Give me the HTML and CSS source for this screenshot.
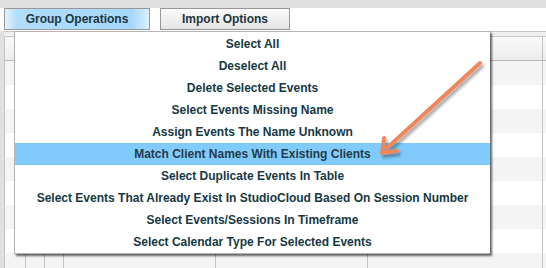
FILE: index.html
```html
<!DOCTYPE html>
<html lang="en">
<head>
    <meta charset="UTF-8">
    <title>Group Operations</title>
    <link rel="stylesheet" href="styles.css">
</head>
<body>
    <div class="topbar"></div>

    <div class="toolbar">
        <button class="tool-btn active">Group Operations</button>
        <button class="tool-btn">Import Options</button>
    </div>

    <!-- Event table behind the menu -->
    <div class="grid">
        <div class="row head">
            <div class="cell c1"></div><div class="cell c2"></div><div class="cell c3"></div>
            <div class="cell c4"></div><div class="cell c5"></div><div class="cell c6"></div>
            <div class="cell c7"></div>
        </div>
        <div class="row"><div class="cell c1"></div><div class="cell c2"></div><div class="cell c3"></div><div class="cell c4"></div><div class="cell c5"></div><div class="cell c6"></div><div class="cell c7"></div></div>
        <div class="row"><div class="cell c1"></div><div class="cell c2"></div><div class="cell c3"></div><div class="cell c4"></div><div class="cell c5"></div><div class="cell c6"></div><div class="cell c7"></div></div>
        <div class="row"><div class="cell c1"></div><div class="cell c2"></div><div class="cell c3"></div><div class="cell c4"></div><div class="cell c5"></div><div class="cell c6"></div><div class="cell c7"></div></div>
        <div class="row"><div class="cell c1"></div><div class="cell c2"></div><div class="cell c3"></div><div class="cell c4"></div><div class="cell c5"></div><div class="cell c6"></div><div class="cell c7"></div></div>
        <div class="row"><div class="cell c1"></div><div class="cell c2"></div><div class="cell c3"></div><div class="cell c4"></div><div class="cell c5"></div><div class="cell c6"></div><div class="cell c7"></div></div>
        <div class="row"><div class="cell c1"></div><div class="cell c2"></div><div class="cell c3"></div><div class="cell c4"></div><div class="cell c5"></div><div class="cell c6"></div><div class="cell c7"></div></div>
        <div class="row"><div class="cell c1"></div><div class="cell c2"></div><div class="cell c3"></div><div class="cell c4"></div><div class="cell c5"></div><div class="cell c6"></div><div class="cell c7"></div></div>
        <div class="row"><div class="cell c1"></div><div class="cell c2"></div><div class="cell c3"></div><div class="cell c4"></div><div class="cell c5"></div><div class="cell c6"></div><div class="cell c7"></div></div>
        <div class="row"><div class="cell c1"></div><div class="cell c2"></div><div class="cell c3"></div><div class="cell c4"></div><div class="cell c5"></div><div class="cell c6"></div><div class="cell c7"></div></div>
    </div>

    <!-- Dropdown menu -->
    <ul class="menu">
        <li>Select All</li>
        <li>Deselect All</li>
        <li>Delete Selected Events</li>
        <li>Select Events Missing Name</li>
        <li>Assign Events The Name Unknown</li>
        <li class="hover">Match Client Names With Existing Clients</li>
        <li>Select Duplicate Events In Table</li>
        <li>Select Events That Already Exist In StudioCloud Based On Session Number</li>
        <li>Select Events/Sessions In Timeframe</li>
        <li>Select Calendar Type For Selected Events</li>
    </ul>

    <!-- Annotation arrow -->
    <svg class="arrow" width="546" height="268" viewBox="0 0 546 268">
        <defs>
            <filter id="shade" x="-20%" y="-20%" width="140%" height="140%">
                <feDropShadow dx="2" dy="3" stdDeviation="1.6" flood-color="#000" flood-opacity="0.35"/>
            </filter>
        </defs>
        <g filter="url(#shade)" stroke="#f0875c" stroke-width="4" stroke-linecap="round" fill="none">
            <line x1="480" y1="63" x2="387" y2="148"/>
            <polyline points="384,138 382,153 397,151" stroke-linejoin="round"/>
        </g>
    </svg>
</body>
</html>
```

FILE: styles.css
```css
body {
    margin: 0;
    width: 546px;
    height: 268px;
    overflow: hidden;
    position: relative;
    background: #fff;
    font-family: "Liberation Sans", Arial, sans-serif;
}

.topbar {
    height: 8px;
    background: #e0e0e0;
}

.toolbar {
    display: flex;
    gap: 10px;
    padding-left: 4px;
    height: 23px;
    border-left: 4px solid #e0e0e0;
    margin-left: -4px;
}

.tool-btn {
    height: 22px;
    padding: 0;
    border: 1px solid #979797;
    border-radius: 0;
    background: linear-gradient(to bottom, #fbfbfb, #e4e4e4);
    color: #1c3640;
    font-family: "Liberation Sans", Arial, sans-serif;
    font-weight: bold;
    font-size: 12px;
    width: 130px;
}

.tool-btn.active {
    width: 146px;
    background: linear-gradient(to right, #e4f3fd 0%, #b2ddfb 8%, #a6d7fa 88%, #dbf0fd 100%);
}

.grid {
    border-left: 4px solid #e0e0e0;
    height: 237px;
}

.grid .row {
    display: flex;
    height: 24px;
}

.grid .row:nth-child(even) {
    background: #f4f4f4;
}

.grid .row.head {
    height: 25px;
    border-top: 1px solid #c6c6c6;
    padding-top: 4px;
    background: #efefef;
}

.grid .row.head .cell {
    background: linear-gradient(to bottom, #fafafa, #ececec);
    border-top: 1px solid #c8c8c8;
    border-bottom: 1px solid #b8b8b8;
}

.cell {
    box-sizing: border-box;
    border-left: 1px solid #c4c4c4;
}

.c1 { width: 21px; }
.c2 { width: 19px; }
.c3 { width: 19px; }
.c4 { width: 152px; }
.c5 { width: 152px; }
.c6 { width: 175px; }
.c7 { flex: 1; }

.menu {
    position: absolute;
    left: 14px;
    top: 31px;
    width: 476px;
    margin: 0;
    padding: 1px 0 0;
    list-style: none;
    background: #fff;
    border: 1px solid #b4b4b4;
    border-right: 0;
    box-sizing: border-box;
    box-shadow: 2px 2px 2px rgba(0, 0, 0, 0.6);
}

.menu li {
    height: 22px;
    line-height: 22px;
    text-align: center;
    font-size: 12px;
    font-weight: bold;
    color: #163842;
}

.menu li.hover {
    background: #80cbfb;
    color: #263b48;
}

.arrow {
    position: absolute;
    left: 0;
    top: 0;
}
```
